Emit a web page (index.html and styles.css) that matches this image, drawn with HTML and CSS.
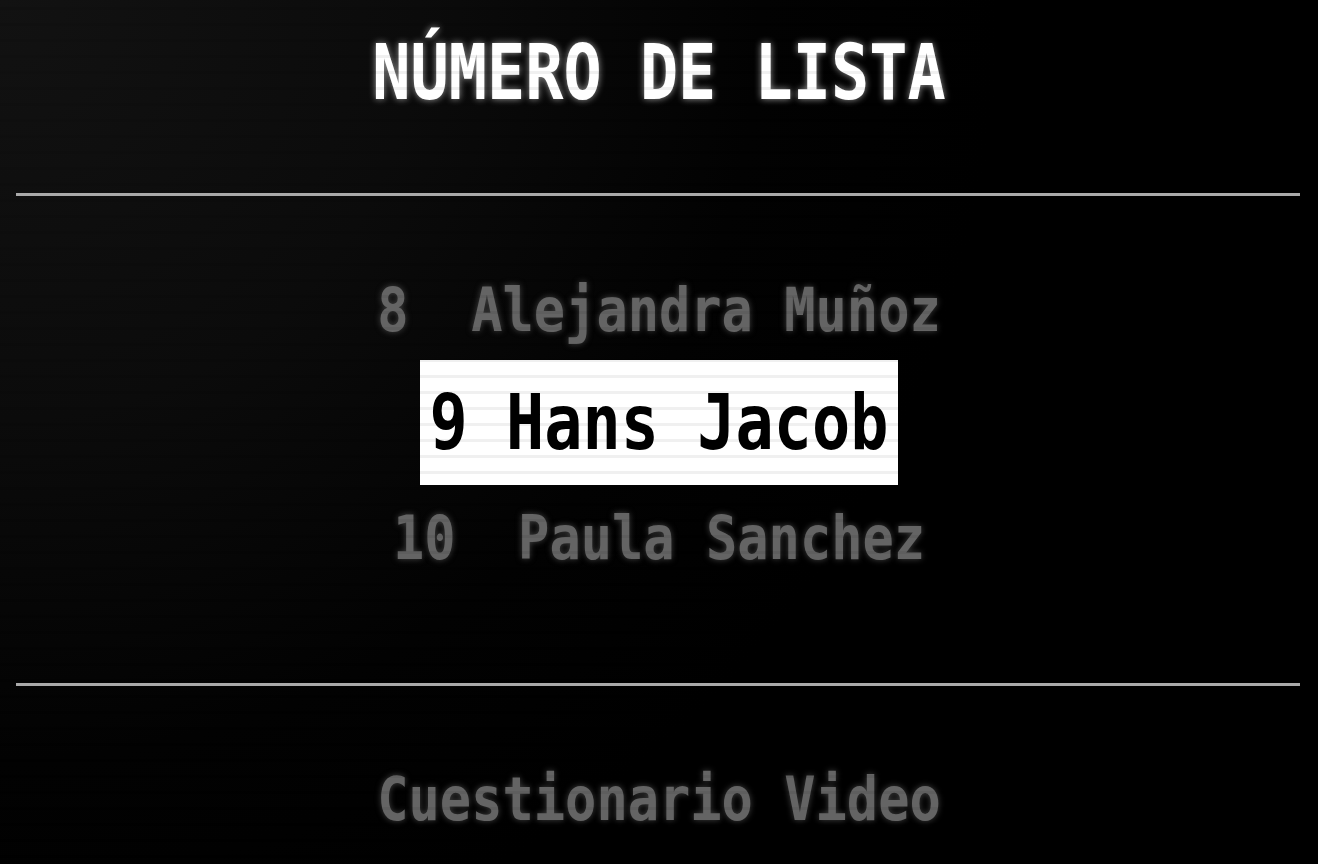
FILE: index.html
```html
<!DOCTYPE html>
<html lang="es">
<head>
    <meta charset="UTF-8">
    <meta name="viewport" content="width=device-width, initial-scale=1.0">
    <title>Número de Lista</title>
    <link rel="stylesheet" href="styles.css">
</head>
<body>

<div class="screen">
    <!-- Cabecera -->
    <div class="header">
        <h1 class="title"><span class="px">NÚMERO DE LISTA</span></h1>
    </div>

    <hr class="divider">

    <!-- Lista de alumnos -->
    <div class="list">
        <div class="item"><span class="px">8  Alejandra Muñoz</span></div>
        <div class="item selected"><span class="px">9 Hans Jacob</span></div>
        <div class="item last"><span class="px">10  Paula Sanchez</span></div>
    </div>

    <hr class="divider">

    <!-- Pie -->
    <div class="footer">
        <div class="item"><span class="px">Cuestionario Video</span></div>
    </div>
</div>

</body>
</html>
```

FILE: styles.css
```css
html, body {
    margin: 0;
    padding: 0;
    height: 100%;
}

body {
    font-family: "DejaVu Sans Mono", "Liberation Mono", monospace;
    font-weight: bold;
    background: radial-gradient(circle at 0 0, #121212 0, #0b0b0b 420px, #020202 760px, #000 1000px);
    color: #fff;
    overflow: hidden;
}

/* Líneas de barrido tipo CRT */
body::after {
    content: "";
    position: fixed;
    inset: 0;
    pointer-events: none;
    background: repeating-linear-gradient(to bottom,
        transparent 0, transparent 7px,
        rgba(0, 0, 0, 0.06) 7px, rgba(0, 0, 0, 0.06) 10px,
        transparent 10px, transparent 16px);
}

.screen {
    display: flex;
    flex-direction: column;
}

.px {
    display: inline-block;
    white-space: pre;
    line-height: 1;
}

.header {
    height: 193px;
    box-sizing: border-box;
    padding-top: 42px;
    text-align: center;
}

.title {
    margin: 0;
    font-size: 63.5px;
    font-weight: bold;
    line-height: 1;
    color: #fff;
    text-shadow: 0 0 7px rgba(255, 255, 255, 0.6);
}

.title .px {
    transform: scaleY(1.2);
}

.divider {
    border: none;
    height: 3px;
    background-color: #a9a9a9;
    margin: 0 18px 0 16px;
}

.list {
    height: 487px;
    box-sizing: border-box;
    padding-top: 88px;
    display: flex;
    flex-direction: column;
    align-items: center;
}

.item {
    font-size: 52px;
    line-height: 1;
    color: #646464;
    text-shadow: 0 0 6px rgba(110, 110, 110, 0.6);
    text-align: center;
}

.item .px {
    transform: scaleY(1.17);
}

.item.selected {
    margin-top: 24px;
    padding: 32px 10px 29px 10px;
    background-color: #fff;
    color: #000;
    font-size: 63.5px;
    text-shadow: none;
}

.item.selected .px {
    transform: scaleY(1.2);
}

.item.last {
    margin-top: 27px;
}

.footer {
    padding-top: 87px;
    display: flex;
    justify-content: center;
}
```
